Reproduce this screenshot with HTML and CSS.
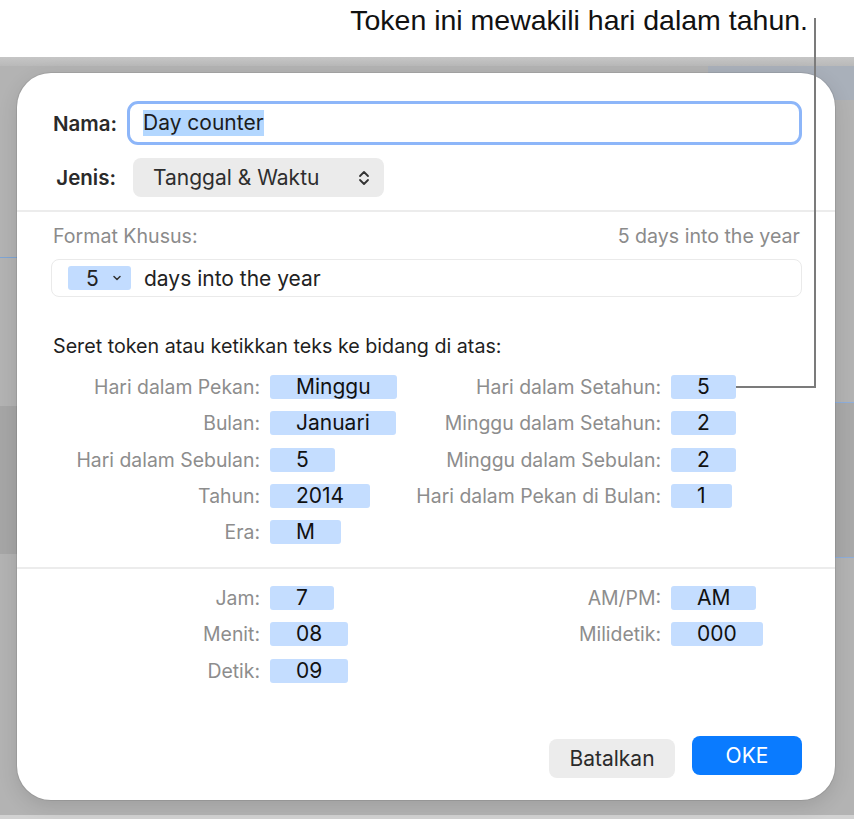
FILE: index.html
```html
<!DOCTYPE html>
<html lang="id">
<head>
  <meta charset="UTF-8" />
  <meta name="viewport" content="width=device-width, initial-scale=1.0"/>
  <title>Format Khusus</title>
  <link rel="stylesheet" href="styles.css">
</head>
<body>
  <div class="screen">
    <div class="topbar">
      <span class="callout">Token ini mewakili hari dalam tahun.</span>
    </div>

    <!-- leader line from the callout to the "Hari dalam Setahun" token -->
    <div class="leader"></div>

    <div class="backdrop">
      <div class="dialog">
        <div class="field-row">
          <label class="field-label" for="name">Nama:</label>
          <div class="name-input" id="name"><span class="selected">Day counter</span></div>
        </div>

        <div class="field-row jenis">
          <label class="field-label">Jenis:</label>
          <div class="popup">
            <span>Tanggal &amp; Waktu</span>
            <svg width="12" height="18" viewBox="0 0 12 18">
              <path d="M2 7 L6 3 L10 7 M2 11 L6 15 L10 11" fill="none" stroke="#333" stroke-width="1.8" stroke-linecap="round" stroke-linejoin="round"/>
            </svg>
          </div>
        </div>

        <hr class="divider">

        <div class="format-head">
          <span>Format Khusus:</span>
          <span>5 days into the year</span>
        </div>

        <div class="format-field">
          <span class="token-menu">
            5
            <svg width="8" height="6" viewBox="0 0 8 6">
              <path d="M1 1.5 L4 4.5 L7 1.5" fill="none" stroke="#333" stroke-width="1.5" stroke-linecap="round" stroke-linejoin="round"/>
            </svg>
          </span>
          <span>days into the year</span>
        </div>

        <p class="hint">Seret token atau ketikkan teks ke bidang di atas:</p>

        <div class="token-grid">
          <span class="tk-label">Hari dalam Pekan:</span><span class="token">Minggu</span>
          <span class="tk-label">Hari dalam Setahun:</span><span class="token">5</span>

          <span class="tk-label">Bulan:</span><span class="token">Januari</span>
          <span class="tk-label">Minggu dalam Setahun:</span><span class="token">2</span>

          <span class="tk-label">Hari dalam Sebulan:</span><span class="token">5</span>
          <span class="tk-label">Minggu dalam Sebulan:</span><span class="token">2</span>

          <span class="tk-label">Tahun:</span><span class="token">2014</span>
          <span class="tk-label">Hari dalam Pekan di Bulan:</span><span class="token">1</span>

          <span class="tk-label">Era:</span><span class="token">M</span>
          <span></span><span></span>
        </div>

        <hr class="divider second">

        <div class="token-grid time">
          <span class="tk-label">Jam:</span><span class="token">7</span>
          <span class="tk-label">AM/PM:</span><span class="token">AM</span>

          <span class="tk-label">Menit:</span><span class="token">08</span>
          <span class="tk-label">Milidetik:</span><span class="token">000</span>

          <span class="tk-label">Detik:</span><span class="token">09</span>
          <span></span><span></span>
        </div>

        <div class="actions">
          <button class="btn cancel">Batalkan</button>
          <button class="btn ok">OKE</button>
        </div>
      </div>
    </div>
  </div>
</body>
</html>
```

FILE: styles.css
```css
body {
  margin: 0;
  font-family: Inter, "Noto Sans", sans-serif;
  background: #ffffff;
}

.screen {
  position: relative;
  width: 854px;
  height: 819px;
  overflow: hidden;
}

.topbar {
  height: 57px;
  background: #ffffff;
  text-align: right;
  padding-right: 46px;
  box-sizing: border-box;
}

.callout {
  display: inline-block;
  margin-top: 4px;
  font-family: "Liberation Sans Narrow", "Liberation Sans", sans-serif;
  font-size: 28.5px;
  line-height: 32px;
  color: #111;
}

.leader {
  position: absolute;
  left: 736px;
  top: 18px;
  width: 78px;
  height: 368px;
  border-right: 2px solid #7b7b7b;
  border-bottom: 2px solid #7b7b7b;
  z-index: 2;
}

.backdrop {
  height: 762px;
  padding: 16px 0 0 17px;
  box-sizing: border-box;
  background:
    linear-gradient(#c6c6c6, #b9b9b9) 0 0 / 100% 9px no-repeat,
    linear-gradient(#7fa5d4, #7fa5d4) 0 200px / 17px 1px no-repeat,
    linear-gradient(#a6a6a6, #a6a6a6) 0 349px / 17px 148px no-repeat,
    linear-gradient(#8eaedb, #8eaedb) right 345px / 19px 1px no-repeat,
    linear-gradient(#a9a9a9, #a9a9a9) right 346px / 19px 154px no-repeat,
    linear-gradient(#8eaedb, #8eaedb) right 500px / 19px 1px no-repeat,
    linear-gradient(#a9b0ba, #a9b0ba) right 9px / 146px 34px no-repeat,
    linear-gradient(#d2d2d2, #d2d2d2) 0 758px / 100% 4px no-repeat,
    #b3b3b3;
}

.dialog {
  width: 818px;
  height: 727px;
  box-sizing: border-box;
  padding: 28px 33px 0 36px;
  background: #ffffff;
  border-radius: 34px;
  box-shadow: 0 0 0 1px rgba(0, 0, 0, 0.08), 0 6px 20px rgba(0, 0, 0, 0.12);
  color: #1c1c1c;
}

.field-row {
  display: flex;
  align-items: center;
}

.field-label {
  width: 63px;
  text-align: right;
  font-size: 20.5px;
  font-weight: 600;
  color: #2a2a2a;
  white-space: nowrap;
}

.name-input {
  margin-left: 11px;
  width: 675px;
  height: 44px;
  box-sizing: border-box;
  border: 3px solid #8db6f9;
  border-radius: 11px;
  padding-left: 13px;
  display: flex;
  align-items: center;
  font-size: 21px;
}

.selected {
  background: #b3d7ff;
  line-height: 26px;
}

.jenis {
  margin-top: 13px;
}

.popup {
  margin-left: 17px;
  width: 251px;
  height: 39px;
  box-sizing: border-box;
  padding: 0 14px 0 20px;
  background: #ebebeb;
  border-radius: 8px;
  display: flex;
  align-items: center;
  justify-content: space-between;
  font-size: 21px;
  color: #2e2e2e;
}

.divider {
  margin: 13px -33px 0 -36px;
  height: 2px;
  border: 0;
  background: #ececec;
}

.divider.second {
  margin-top: 23px;
}

.format-head {
  margin-top: 13px;
  padding-right: 2px;
  display: flex;
  justify-content: space-between;
  font-size: 19.6px;
  line-height: 22px;
  color: #8b8b8b;
}

.format-field {
  margin: 12px 0 0 -2px;
  height: 38px;
  box-sizing: border-box;
  border: 1px solid #eaeaea;
  border-radius: 8px;
  padding-left: 16px;
  display: flex;
  align-items: center;
  gap: 13px;
  font-size: 21px;
  color: #222;
}

.token-menu {
  width: 63px;
  height: 24px;
  box-sizing: border-box;
  padding: 0 10px 0 18px;
  background: #c2dcff;
  border-radius: 3px;
  display: flex;
  align-items: center;
  justify-content: space-between;
}

.hint {
  margin: 38px 0 0;
  font-size: 19.7px;
  line-height: 22px;
  color: #1f1f1f;
}

.token-grid {
  margin-top: 18px;
  display: grid;
  grid-template-columns: 207px 130px 251px auto;
  grid-auto-rows: 24px;
  column-gap: 10px;
  row-gap: 12.25px;
  align-items: center;
}

.token-grid.time {
  margin-top: 17px;
}

.tk-label {
  text-align: right;
  font-size: 19.4px;
  line-height: 24px;
  color: #8d8d8d;
  white-space: nowrap;
}

.token {
  justify-self: start;
  padding: 0 26px;
  line-height: 24px;
  background: #c4ddff;
  border-radius: 3px;
  font-size: 21px;
  color: #111;
  text-align: center;
}

.actions {
  margin-top: 53px;
  display: flex;
  justify-content: flex-end;
  align-items: flex-start;
  gap: 17px;
}

.btn {
  height: 39px;
  border: none;
  border-radius: 8px;
  font-family: Inter, "Noto Sans", sans-serif;
  font-size: 21px;
  cursor: pointer;
}

.btn.cancel {
  margin-top: 3px;
  width: 126px;
  background: #ececec;
  color: #2b2b2b;
}

.btn.ok {
  width: 110px;
  background: #0a7bff;
  color: #ffffff;
}
```
